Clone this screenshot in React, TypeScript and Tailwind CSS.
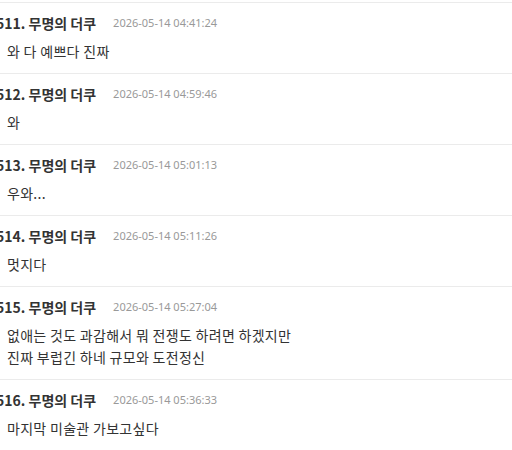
import React from "react";

const items = [
  { n: 511, t: "2026-05-14 04:41:24", lines: ["와 다 예쁘다 진짜"] },
  { n: 512, t: "2026-05-14 04:59:46", lines: ["와"] },
  { n: 513, t: "2026-05-14 05:01:13", lines: ["우와..."] },
  { n: 514, t: "2026-05-14 05:11:26", lines: ["멋지다"] },
  {
    n: 515,
    t: "2026-05-14 05:27:04",
    lines: ["없애는 것도 과감해서 뭐 전쟁도 하려면 하겠지만", "진짜 부럽긴 하네 규모와 도전정신"],
  },
  { n: 516, t: "2026-05-14 05:36:33", lines: ["마지막 미술관 가보고싶다"] },
];

const kr = { fontFamily: '"Noto Sans CJK KR", "Noto Sans", sans-serif' };

export default function App() {
  return (
    <div className="w-[512px] h-[450px] overflow-hidden bg-white pt-[2px]" style={kr}>
      <div className="border-t border-[#ebebeb]">
        {items.map((it) => (
          <div key={it.n} className="border-b border-[#ebebeb] pt-[10px] pb-[11px]">
            <div className="flex items-center h-[20px] -ml-[4px]">
              <span className="text-[14px] font-bold text-[#333] leading-[20px]">
                {it.n}. 무명의 더쿠
              </span>
              <span
                className="ml-[17px] text-[11px] text-[#999] leading-[20px]"
                style={{ fontFamily: '"Noto Sans", sans-serif' }}
              >
                {it.t}
              </span>
            </div>
            <div className="mt-[7px] pl-[7px] text-[14px] tracking-[0.3px] text-[#333] leading-[22px]">
              {it.lines.map((l, i) => (
                <div key={i}>{l}</div>
              ))}
            </div>
          </div>
        ))}
      </div>
    </div>
  );
}
